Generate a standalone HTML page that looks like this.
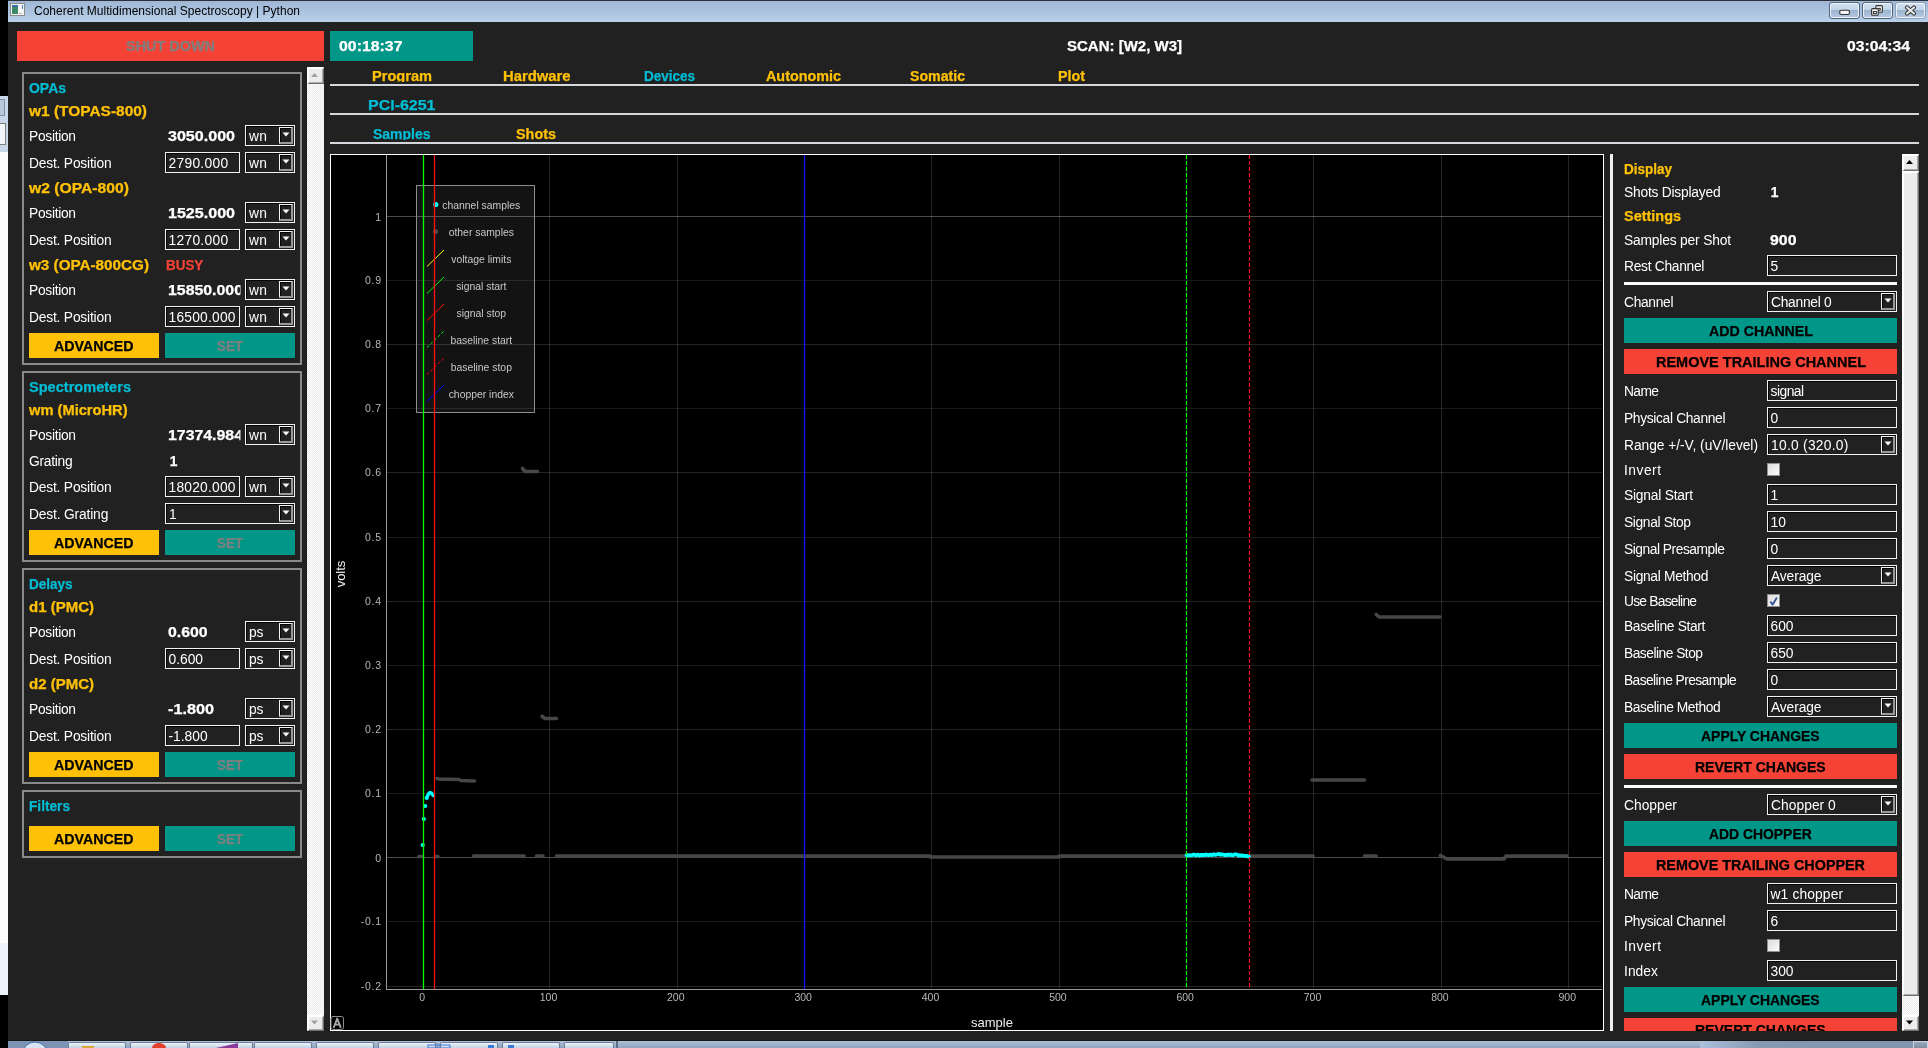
<!DOCTYPE html>
<html><head><meta charset="utf-8"><style>
html,body{margin:0;padding:0;width:1928px;height:1048px;overflow:hidden;background:#212121}
body{position:relative;font-family:"Liberation Sans",sans-serif}
body div, body svg{position:absolute}
body div div{position:absolute}
.t{white-space:pre}
</style></head><body>
<div style="left:0px;top:0px;width:8px;height:97px;background:#000"></div>
<div style="left:0px;top:96px;width:8px;height:56px;background:#c9d7ea"></div>
<div style="left:0px;top:99px;width:4px;height:15px;background:#b9c8dc;border:1px solid #8090a8;border-left:none"></div>
<div style="left:0px;top:123px;width:5px;height:20px;background:#f2f5f9;border:1px solid #808080;border-left:none"></div>
<div style="left:0px;top:152px;width:8px;height:791px;background:#fdfdfd"></div>
<div style="left:0px;top:943px;width:8px;height:52px;background:#eef3fc"></div>
<div style="left:0px;top:995px;width:8px;height:53px;background:#000"></div>
<div style="left:8px;top:0px;width:1920px;height:1041px;background:#212121"></div>
<div style="left:8px;top:0px;width:1920px;height:1px;background:#2a2f38"></div>
<div style="left:8px;top:1px;width:1920px;height:21px;background:linear-gradient(#9fb7d5,#b9d0ea)"></div>
<svg style="left:10px;top:3px" width="15" height="13"><rect x="0.5" y="0.5" width="14" height="12" fill="#f4f4f4" stroke="#8a8a8a"/><rect x="2" y="2" width="6" height="9" fill="#3c8a6a"/><rect x="2" y="2" width="6" height="2" fill="#3a6ea8"/><rect x="12" y="2" width="1" height="4" fill="#3b7bd0"/><rect x="9" y="10" width="3" height="1" fill="#bbb"/></svg>
<div class="t" style="left:34.00px;top:5.00px;font-size:12px;line-height:12px;color:#000;letter-spacing:0.016px;">Coherent Multidimensional Spectroscopy | Python</div>
<div style="left:1829px;top:2px;width:31px;height:17px;box-sizing:border-box;border:1px solid #52647c;border-radius:3px;box-shadow:inset 0 0 0 1px rgba(255,255,255,0.75);background:linear-gradient(#d2e0f0 0%,#c3d5ea 45%,#9db4d0 50%,#b6cae3 100%)"></div>
<div style="left:1862px;top:2px;width:31px;height:17px;box-sizing:border-box;border:1px solid #52647c;border-radius:3px;box-shadow:inset 0 0 0 1px rgba(255,255,255,0.75);background:linear-gradient(#d2e0f0 0%,#c3d5ea 45%,#9db4d0 50%,#b6cae3 100%)"></div>
<div style="left:1895px;top:2px;width:31px;height:17px;box-sizing:border-box;border:1px solid #8ea2bd;border-radius:3px;box-shadow:inset 0 0 0 1px rgba(255,255,255,0.75);background:linear-gradient(#d2e0f0 0%,#c3d5ea 45%,#9db4d0 50%,#b6cae3 100%)"></div>
<svg style="left:1829px;top:2px" width="97" height="17"><rect x="10.8" y="8.3" width="9.6" height="4.2" rx="1.2" fill="#f4f4f4" stroke="#333" stroke-width="1.1"/><rect x="46.8" y="3.6" width="6.6" height="6.6" rx="1" fill="#f4f4f4" stroke="#333" stroke-width="1.1"/><rect x="48.6" y="6.4" width="2.6" height="2" fill="none" stroke="#333" stroke-width="1"/><rect x="42.6" y="6.6" width="6.6" height="6.6" rx="1" fill="#f4f4f4" stroke="#333" stroke-width="1.1"/><rect x="44.4" y="9.6" width="3" height="2" fill="none" stroke="#333" stroke-width="1"/><path d="M78 5.5 L85 11.5 M85 5.5 L78 11.5" stroke="#333" stroke-width="4.2" stroke-linecap="round"/><path d="M78 5.5 L85 11.5 M85 5.5 L78 11.5" stroke="#e6e6e6" stroke-width="2.2" stroke-linecap="round"/></svg>
<div style="left:17px;top:31px;width:307px;height:30px;background:#f44336"></div>
<div class="t" style="left:126.00px;top:40.00px;font-size:13.8px;line-height:13.8px;color:#7f7f7f;font-weight:bold;-webkit-text-stroke:0.25px #7f7f7f;transform:scaleX(1.0461);transform-origin:0 0;">SHUT DOWN</div>
<div style="left:330px;top:31px;width:143px;height:30px;background:#009688"></div>
<div class="t" style="left:339.00px;top:40.00px;font-size:13.8px;line-height:13.8px;color:#fff;font-weight:bold;-webkit-text-stroke:0.25px #fff;transform:scaleX(1.1496);transform-origin:0 0;">00:18:37</div>
<div class="t" style="left:1067.00px;top:40.00px;font-size:13.8px;line-height:13.8px;color:#fff;font-weight:bold;-webkit-text-stroke:0.25px #fff;transform:scaleX(1.0871);transform-origin:0 0;">SCAN: [W2, W3]</div>
<div class="t" style="left:1846.50px;top:40.00px;font-size:13.8px;line-height:13.8px;color:#fff;font-weight:bold;-webkit-text-stroke:0.25px #fff;transform:scaleX(1.1406);transform-origin:0 0;">03:04:34</div>
<div style="left:330px;top:84px;width:1589px;height:2px;background:#d4d7db"></div>
<div style="left:330px;top:113px;width:1589px;height:2px;background:#d4d7db"></div>
<div style="left:330px;top:142px;width:1589px;height:2px;background:#d4d7db"></div>
<div style="left:0;top:0;width:1928px;height:82px;overflow:hidden"><div class="t" style="left:372.00px;top:70.00px;font-size:13.8px;line-height:13.8px;color:#ffc107;font-weight:bold;-webkit-text-stroke:0.25px #ffc107;transform:scaleX(1.0573);transform-origin:0 0;">Program</div></div>
<div style="left:0;top:0;width:1928px;height:82px;overflow:hidden"><div class="t" style="left:502.65px;top:70.00px;font-size:13.8px;line-height:13.8px;color:#ffc107;font-weight:bold;-webkit-text-stroke:0.25px #ffc107;transform:scaleX(1.0733);transform-origin:0 0;">Hardware</div></div>
<div style="left:0;top:0;width:1928px;height:82px;overflow:hidden"><div class="t" style="left:643.90px;top:70.00px;font-size:13.8px;line-height:13.8px;color:#00bcd4;font-weight:bold;-webkit-text-stroke:0.25px #00bcd4;transform:scaleX(0.9775);transform-origin:0 0;">Devices</div></div>
<div style="left:0;top:0;width:1928px;height:82px;overflow:hidden"><div class="t" style="left:765.80px;top:70.00px;font-size:13.8px;line-height:13.8px;color:#ffc107;font-weight:bold;-webkit-text-stroke:0.25px #ffc107;transform:scaleX(1.0410);transform-origin:0 0;">Autonomic</div></div>
<div style="left:0;top:0;width:1928px;height:82px;overflow:hidden"><div class="t" style="left:909.80px;top:70.00px;font-size:13.8px;line-height:13.8px;color:#ffc107;font-weight:bold;-webkit-text-stroke:0.25px #ffc107;transform:scaleX(1.0247);transform-origin:0 0;">Somatic</div></div>
<div style="left:0;top:0;width:1928px;height:82px;overflow:hidden"><div class="t" style="left:1058.00px;top:70.00px;font-size:13.8px;line-height:13.8px;color:#ffc107;font-weight:bold;-webkit-text-stroke:0.25px #ffc107;transform:scaleX(1.0360);transform-origin:0 0;">Plot</div></div>
<div class="t" style="left:368.05px;top:99.00px;font-size:13.8px;line-height:13.8px;color:#00bcd4;font-weight:bold;-webkit-text-stroke:0.25px #00bcd4;transform:scaleX(1.1579);transform-origin:0 0;">PCI-6251</div>
<div style="left:0;top:0;width:1928px;height:140px;overflow:hidden"><div class="t" style="left:372.55px;top:128.00px;font-size:13.8px;line-height:13.8px;color:#00bcd4;font-weight:bold;-webkit-text-stroke:0.25px #00bcd4;transform:scaleX(1.0129);transform-origin:0 0;">Samples</div></div>
<div class="t" style="left:516.40px;top:128.00px;font-size:13.8px;line-height:13.8px;color:#ffc107;font-weight:bold;-webkit-text-stroke:0.25px #ffc107;transform:scaleX(1.0436);transform-origin:0 0;">Shots</div>
<div style="left:22px;top:72px;width:280px;height:293px;box-sizing:border-box;border:2px solid #898989"></div>
<div style="left:22px;top:371px;width:280px;height:191px;box-sizing:border-box;border:2px solid #898989"></div>
<div style="left:22px;top:568px;width:280px;height:216px;box-sizing:border-box;border:2px solid #898989"></div>
<div style="left:22px;top:790px;width:280px;height:68px;box-sizing:border-box;border:2px solid #898989"></div>
<div class="t" style="left:29.00px;top:82.00px;font-size:13.8px;line-height:13.8px;color:#00bcd4;font-weight:bold;-webkit-text-stroke:0.25px #00bcd4;transform:scaleX(1.0124);transform-origin:0 0;">OPAs</div>
<div class="t" style="left:29.00px;top:105.00px;font-size:13.8px;line-height:13.8px;color:#ffc107;font-weight:bold;-webkit-text-stroke:0.25px #ffc107;transform:scaleX(1.1206);transform-origin:0 0;">w1 (TOPAS-800)</div>
<div class="t" style="left:29.00px;top:130.00px;font-size:13.8px;line-height:13.8px;color:#fff;letter-spacing:-0.299px;">Position</div>
<div class="t" style="left:168.00px;top:130.00px;font-size:13.8px;line-height:13.8px;color:#fff;font-weight:bold;-webkit-text-stroke:0.25px #fff;transform:scaleX(1.1643);transform-origin:0 0;width:61.84px;overflow:hidden;">3050.000</div>
<div style="left:245px;top:125px;width:50px;height:21px;background:#212121;box-sizing:border-box;border:1px solid #f2f2f2;box-shadow:inset 1px 1px 0 #050505"></div>
<div style="left:279px;top:127px;width:14px;height:17px;box-sizing:border-box;border-top:1px solid #f4f4f4;border-left:1px solid #f4f4f4;border-right:2px solid #9a9a9a;border-bottom:2px solid #9a9a9a;box-shadow:inset 1px 1px 0 #050505;background:#212121"></div>
<svg style="left:279px;top:127px" width="14" height="17"><path d="M3.5 5.5 L10.5 5.5 L7 9.5 Z" fill="#f8f8f8"/></svg>
<div class="t" style="left:249.00px;top:130.00px;font-size:13.8px;line-height:13.8px;color:#fff;letter-spacing:0.359px;">wn</div>
<div class="t" style="left:29.00px;top:157.00px;font-size:13.8px;line-height:13.8px;color:#fff;letter-spacing:-0.194px;">Dest. Position</div>
<div style="left:165px;top:152px;width:75px;height:21px;background:#212121;box-sizing:border-box;border:1px solid #f2f2f2;box-shadow:inset 1px 1px 0 #050505"></div>
<div class="t" style="left:168.50px;top:157.00px;font-size:13.8px;line-height:13.8px;color:#fff;letter-spacing:0.293px;">2790.000</div>
<div style="left:245px;top:152px;width:50px;height:21px;background:#212121;box-sizing:border-box;border:1px solid #f2f2f2;box-shadow:inset 1px 1px 0 #050505"></div>
<div style="left:279px;top:154px;width:14px;height:17px;box-sizing:border-box;border-top:1px solid #f4f4f4;border-left:1px solid #f4f4f4;border-right:2px solid #9a9a9a;border-bottom:2px solid #9a9a9a;box-shadow:inset 1px 1px 0 #050505;background:#212121"></div>
<svg style="left:279px;top:154px" width="14" height="17"><path d="M3.5 5.5 L10.5 5.5 L7 9.5 Z" fill="#f8f8f8"/></svg>
<div class="t" style="left:249.00px;top:157.00px;font-size:13.8px;line-height:13.8px;color:#fff;letter-spacing:0.359px;">wn</div>
<div class="t" style="left:29.00px;top:182.00px;font-size:13.8px;line-height:13.8px;color:#ffc107;font-weight:bold;-webkit-text-stroke:0.25px #ffc107;transform:scaleX(1.1374);transform-origin:0 0;">w2 (OPA-800)</div>
<div class="t" style="left:29.00px;top:207.00px;font-size:13.8px;line-height:13.8px;color:#fff;letter-spacing:-0.299px;">Position</div>
<div class="t" style="left:168.00px;top:207.00px;font-size:13.8px;line-height:13.8px;color:#fff;font-weight:bold;-webkit-text-stroke:0.25px #fff;transform:scaleX(1.1643);transform-origin:0 0;width:61.84px;overflow:hidden;">1525.000</div>
<div style="left:245px;top:202px;width:50px;height:21px;background:#212121;box-sizing:border-box;border:1px solid #f2f2f2;box-shadow:inset 1px 1px 0 #050505"></div>
<div style="left:279px;top:204px;width:14px;height:17px;box-sizing:border-box;border-top:1px solid #f4f4f4;border-left:1px solid #f4f4f4;border-right:2px solid #9a9a9a;border-bottom:2px solid #9a9a9a;box-shadow:inset 1px 1px 0 #050505;background:#212121"></div>
<svg style="left:279px;top:204px" width="14" height="17"><path d="M3.5 5.5 L10.5 5.5 L7 9.5 Z" fill="#f8f8f8"/></svg>
<div class="t" style="left:249.00px;top:207.00px;font-size:13.8px;line-height:13.8px;color:#fff;letter-spacing:0.359px;">wn</div>
<div class="t" style="left:29.00px;top:234.00px;font-size:13.8px;line-height:13.8px;color:#fff;letter-spacing:-0.194px;">Dest. Position</div>
<div style="left:165px;top:229px;width:75px;height:21px;background:#212121;box-sizing:border-box;border:1px solid #f2f2f2;box-shadow:inset 1px 1px 0 #050505"></div>
<div class="t" style="left:168.50px;top:234.00px;font-size:13.8px;line-height:13.8px;color:#fff;letter-spacing:0.293px;">1270.000</div>
<div style="left:245px;top:229px;width:50px;height:21px;background:#212121;box-sizing:border-box;border:1px solid #f2f2f2;box-shadow:inset 1px 1px 0 #050505"></div>
<div style="left:279px;top:231px;width:14px;height:17px;box-sizing:border-box;border-top:1px solid #f4f4f4;border-left:1px solid #f4f4f4;border-right:2px solid #9a9a9a;border-bottom:2px solid #9a9a9a;box-shadow:inset 1px 1px 0 #050505;background:#212121"></div>
<svg style="left:279px;top:231px" width="14" height="17"><path d="M3.5 5.5 L10.5 5.5 L7 9.5 Z" fill="#f8f8f8"/></svg>
<div class="t" style="left:249.00px;top:234.00px;font-size:13.8px;line-height:13.8px;color:#fff;letter-spacing:0.359px;">wn</div>
<div class="t" style="left:29.00px;top:259.00px;font-size:13.8px;line-height:13.8px;color:#ffc107;font-weight:bold;-webkit-text-stroke:0.25px #ffc107;transform:scaleX(1.1047);transform-origin:0 0;">w3 (OPA-800CG)</div>
<div class="t" style="left:165.70px;top:259.00px;font-size:13.8px;line-height:13.8px;color:#f44336;font-weight:bold;-webkit-text-stroke:0.25px #f44336;transform:scaleX(0.9728);transform-origin:0 0;">BUSY</div>
<div class="t" style="left:29.00px;top:284.00px;font-size:13.8px;line-height:13.8px;color:#fff;letter-spacing:-0.299px;">Position</div>
<div class="t" style="left:168.00px;top:284.00px;font-size:13.8px;line-height:13.8px;color:#fff;font-weight:bold;-webkit-text-stroke:0.25px #fff;transform:scaleX(1.1500);transform-origin:0 0;width:62.61px;overflow:hidden;">15850.000</div>
<div style="left:245px;top:279px;width:50px;height:21px;background:#212121;box-sizing:border-box;border:1px solid #f2f2f2;box-shadow:inset 1px 1px 0 #050505"></div>
<div style="left:279px;top:281px;width:14px;height:17px;box-sizing:border-box;border-top:1px solid #f4f4f4;border-left:1px solid #f4f4f4;border-right:2px solid #9a9a9a;border-bottom:2px solid #9a9a9a;box-shadow:inset 1px 1px 0 #050505;background:#212121"></div>
<svg style="left:279px;top:281px" width="14" height="17"><path d="M3.5 5.5 L10.5 5.5 L7 9.5 Z" fill="#f8f8f8"/></svg>
<div class="t" style="left:249.00px;top:284.00px;font-size:13.8px;line-height:13.8px;color:#fff;letter-spacing:0.359px;">wn</div>
<div class="t" style="left:29.00px;top:311.00px;font-size:13.8px;line-height:13.8px;color:#fff;letter-spacing:-0.194px;">Dest. Position</div>
<div style="left:165px;top:306px;width:75px;height:21px;background:#212121;box-sizing:border-box;border:1px solid #f2f2f2;box-shadow:inset 1px 1px 0 #050505"></div>
<div class="t" style="left:168.50px;top:311.00px;font-size:13.8px;line-height:13.8px;color:#fff;letter-spacing:0.223px;">16500.000</div>
<div style="left:245px;top:306px;width:50px;height:21px;background:#212121;box-sizing:border-box;border:1px solid #f2f2f2;box-shadow:inset 1px 1px 0 #050505"></div>
<div style="left:279px;top:308px;width:14px;height:17px;box-sizing:border-box;border-top:1px solid #f4f4f4;border-left:1px solid #f4f4f4;border-right:2px solid #9a9a9a;border-bottom:2px solid #9a9a9a;box-shadow:inset 1px 1px 0 #050505;background:#212121"></div>
<svg style="left:279px;top:308px" width="14" height="17"><path d="M3.5 5.5 L10.5 5.5 L7 9.5 Z" fill="#f8f8f8"/></svg>
<div class="t" style="left:249.00px;top:311.00px;font-size:13.8px;line-height:13.8px;color:#fff;letter-spacing:0.359px;">wn</div>
<div style="left:29px;top:333px;width:130px;height:25px;background:#ffc107"></div>
<div class="t" style="left:54.30px;top:340.00px;font-size:13.8px;line-height:13.8px;color:#000;font-weight:bold;-webkit-text-stroke:0.25px #000;transform:scaleX(1.0289);transform-origin:0 0;">ADVANCED</div>
<div style="left:165px;top:333px;width:130px;height:25px;background:#009688"></div>
<div class="t" style="left:217.00px;top:340.00px;font-size:13.8px;line-height:13.8px;color:#7f7f7f;font-weight:bold;-webkit-text-stroke:0.25px #7f7f7f;transform:scaleX(0.9686);transform-origin:0 0;">SET</div>
<div class="t" style="left:29.00px;top:381.00px;font-size:13.8px;line-height:13.8px;color:#00bcd4;font-weight:bold;-webkit-text-stroke:0.25px #00bcd4;transform:scaleX(1.0556);transform-origin:0 0;">Spectrometers</div>
<div class="t" style="left:29.00px;top:404.00px;font-size:13.8px;line-height:13.8px;color:#ffc107;font-weight:bold;-webkit-text-stroke:0.25px #ffc107;transform:scaleX(1.0631);transform-origin:0 0;">wm (MicroHR)</div>
<div class="t" style="left:29.00px;top:429.00px;font-size:13.8px;line-height:13.8px;color:#fff;letter-spacing:-0.299px;">Position</div>
<div class="t" style="left:168.00px;top:429.00px;font-size:13.8px;line-height:13.8px;color:#fff;font-weight:bold;-webkit-text-stroke:0.25px #fff;transform:scaleX(1.1500);transform-origin:0 0;width:62.61px;overflow:hidden;">17374.984</div>
<div style="left:245px;top:424px;width:50px;height:21px;background:#212121;box-sizing:border-box;border:1px solid #f2f2f2;box-shadow:inset 1px 1px 0 #050505"></div>
<div style="left:279px;top:426px;width:14px;height:17px;box-sizing:border-box;border-top:1px solid #f4f4f4;border-left:1px solid #f4f4f4;border-right:2px solid #9a9a9a;border-bottom:2px solid #9a9a9a;box-shadow:inset 1px 1px 0 #050505;background:#212121"></div>
<svg style="left:279px;top:426px" width="14" height="17"><path d="M3.5 5.5 L10.5 5.5 L7 9.5 Z" fill="#f8f8f8"/></svg>
<div class="t" style="left:249.00px;top:429.00px;font-size:13.8px;line-height:13.8px;color:#fff;letter-spacing:0.359px;">wn</div>
<div class="t" style="left:29.00px;top:455.00px;font-size:13.8px;line-height:13.8px;color:#fff;letter-spacing:-0.275px;">Grating</div>
<div class="t" style="left:169.70px;top:455.00px;font-size:13.8px;line-height:13.8px;color:#fff;font-weight:bold;-webkit-text-stroke:0.25px #fff;">1</div>
<div class="t" style="left:29.00px;top:481.00px;font-size:13.8px;line-height:13.8px;color:#fff;letter-spacing:-0.194px;">Dest. Position</div>
<div style="left:165px;top:476px;width:75px;height:21px;background:#212121;box-sizing:border-box;border:1px solid #f2f2f2;box-shadow:inset 1px 1px 0 #050505"></div>
<div class="t" style="left:168.50px;top:481.00px;font-size:13.8px;line-height:13.8px;color:#fff;letter-spacing:0.223px;">18020.000</div>
<div style="left:245px;top:476px;width:50px;height:21px;background:#212121;box-sizing:border-box;border:1px solid #f2f2f2;box-shadow:inset 1px 1px 0 #050505"></div>
<div style="left:279px;top:478px;width:14px;height:17px;box-sizing:border-box;border-top:1px solid #f4f4f4;border-left:1px solid #f4f4f4;border-right:2px solid #9a9a9a;border-bottom:2px solid #9a9a9a;box-shadow:inset 1px 1px 0 #050505;background:#212121"></div>
<svg style="left:279px;top:478px" width="14" height="17"><path d="M3.5 5.5 L10.5 5.5 L7 9.5 Z" fill="#f8f8f8"/></svg>
<div class="t" style="left:249.00px;top:481.00px;font-size:13.8px;line-height:13.8px;color:#fff;letter-spacing:0.359px;">wn</div>
<div class="t" style="left:29.00px;top:508.00px;font-size:13.8px;line-height:13.8px;color:#fff;letter-spacing:-0.165px;">Dest. Grating</div>
<div style="left:165px;top:503px;width:130px;height:21px;background:#212121;box-sizing:border-box;border:1px solid #f2f2f2;box-shadow:inset 1px 1px 0 #050505"></div>
<div style="left:279px;top:505px;width:14px;height:17px;box-sizing:border-box;border-top:1px solid #f4f4f4;border-left:1px solid #f4f4f4;border-right:2px solid #9a9a9a;border-bottom:2px solid #9a9a9a;box-shadow:inset 1px 1px 0 #050505;background:#212121"></div>
<svg style="left:279px;top:505px" width="14" height="17"><path d="M3.5 5.5 L10.5 5.5 L7 9.5 Z" fill="#f8f8f8"/></svg>
<div class="t" style="left:169.00px;top:508.00px;font-size:13.8px;line-height:13.8px;color:#fff;">1</div>
<div style="left:29px;top:530px;width:130px;height:25px;background:#ffc107"></div>
<div class="t" style="left:54.30px;top:537.00px;font-size:13.8px;line-height:13.8px;color:#000;font-weight:bold;-webkit-text-stroke:0.25px #000;transform:scaleX(1.0289);transform-origin:0 0;">ADVANCED</div>
<div style="left:165px;top:530px;width:130px;height:25px;background:#009688"></div>
<div class="t" style="left:217.00px;top:537.00px;font-size:13.8px;line-height:13.8px;color:#7f7f7f;font-weight:bold;-webkit-text-stroke:0.25px #7f7f7f;transform:scaleX(0.9686);transform-origin:0 0;">SET</div>
<div class="t" style="left:29.00px;top:578.00px;font-size:13.8px;line-height:13.8px;color:#00bcd4;font-weight:bold;-webkit-text-stroke:0.25px #00bcd4;transform:scaleX(0.9798);transform-origin:0 0;">Delays</div>
<div class="t" style="left:29.00px;top:601.00px;font-size:13.8px;line-height:13.8px;color:#ffc107;font-weight:bold;-webkit-text-stroke:0.25px #ffc107;transform:scaleX(1.0870);transform-origin:0 0;">d1 (PMC)</div>
<div class="t" style="left:29.00px;top:626.00px;font-size:13.8px;line-height:13.8px;color:#fff;letter-spacing:-0.299px;">Position</div>
<div class="t" style="left:168.00px;top:626.00px;font-size:13.8px;line-height:13.8px;color:#fff;font-weight:bold;-webkit-text-stroke:0.25px #fff;transform:scaleX(1.1497);transform-origin:0 0;width:62.63px;overflow:hidden;">0.600</div>
<div style="left:245px;top:621px;width:50px;height:21px;background:#212121;box-sizing:border-box;border:1px solid #f2f2f2;box-shadow:inset 1px 1px 0 #050505"></div>
<div style="left:279px;top:623px;width:14px;height:17px;box-sizing:border-box;border-top:1px solid #f4f4f4;border-left:1px solid #f4f4f4;border-right:2px solid #9a9a9a;border-bottom:2px solid #9a9a9a;box-shadow:inset 1px 1px 0 #050505;background:#212121"></div>
<svg style="left:279px;top:623px" width="14" height="17"><path d="M3.5 5.5 L10.5 5.5 L7 9.5 Z" fill="#f8f8f8"/></svg>
<div class="t" style="left:249.00px;top:626.00px;font-size:13.8px;line-height:13.8px;color:#fff;letter-spacing:-0.178px;">ps</div>
<div class="t" style="left:29.00px;top:653.00px;font-size:13.8px;line-height:13.8px;color:#fff;letter-spacing:-0.194px;">Dest. Position</div>
<div style="left:165px;top:648px;width:75px;height:21px;background:#212121;box-sizing:border-box;border:1px solid #f2f2f2;box-shadow:inset 1px 1px 0 #050505"></div>
<div class="t" style="left:168.50px;top:653.00px;font-size:13.8px;line-height:13.8px;color:#fff;">0.600</div>
<div style="left:245px;top:648px;width:50px;height:21px;background:#212121;box-sizing:border-box;border:1px solid #f2f2f2;box-shadow:inset 1px 1px 0 #050505"></div>
<div style="left:279px;top:650px;width:14px;height:17px;box-sizing:border-box;border-top:1px solid #f4f4f4;border-left:1px solid #f4f4f4;border-right:2px solid #9a9a9a;border-bottom:2px solid #9a9a9a;box-shadow:inset 1px 1px 0 #050505;background:#212121"></div>
<svg style="left:279px;top:650px" width="14" height="17"><path d="M3.5 5.5 L10.5 5.5 L7 9.5 Z" fill="#f8f8f8"/></svg>
<div class="t" style="left:249.00px;top:653.00px;font-size:13.8px;line-height:13.8px;color:#fff;letter-spacing:-0.178px;">ps</div>
<div class="t" style="left:29.00px;top:678.00px;font-size:13.8px;line-height:13.8px;color:#ffc107;font-weight:bold;-webkit-text-stroke:0.25px #ffc107;transform:scaleX(1.0870);transform-origin:0 0;">d2 (PMC)</div>
<div class="t" style="left:29.00px;top:703.00px;font-size:13.8px;line-height:13.8px;color:#fff;letter-spacing:-0.299px;">Position</div>
<div class="t" style="left:168.00px;top:703.00px;font-size:13.8px;line-height:13.8px;color:#fff;font-weight:bold;-webkit-text-stroke:0.25px #fff;transform:scaleX(1.1757);transform-origin:0 0;width:61.24px;overflow:hidden;">-1.800</div>
<div style="left:245px;top:698px;width:50px;height:21px;background:#212121;box-sizing:border-box;border:1px solid #f2f2f2;box-shadow:inset 1px 1px 0 #050505"></div>
<div style="left:279px;top:700px;width:14px;height:17px;box-sizing:border-box;border-top:1px solid #f4f4f4;border-left:1px solid #f4f4f4;border-right:2px solid #9a9a9a;border-bottom:2px solid #9a9a9a;box-shadow:inset 1px 1px 0 #050505;background:#212121"></div>
<svg style="left:279px;top:700px" width="14" height="17"><path d="M3.5 5.5 L10.5 5.5 L7 9.5 Z" fill="#f8f8f8"/></svg>
<div class="t" style="left:249.00px;top:703.00px;font-size:13.8px;line-height:13.8px;color:#fff;letter-spacing:-0.178px;">ps</div>
<div class="t" style="left:29.00px;top:730.00px;font-size:13.8px;line-height:13.8px;color:#fff;letter-spacing:-0.194px;">Dest. Position</div>
<div style="left:165px;top:725px;width:75px;height:21px;background:#212121;box-sizing:border-box;border:1px solid #f2f2f2;box-shadow:inset 1px 1px 0 #050505"></div>
<div class="t" style="left:168.50px;top:730.00px;font-size:13.8px;line-height:13.8px;color:#fff;">-1.800</div>
<div style="left:245px;top:725px;width:50px;height:21px;background:#212121;box-sizing:border-box;border:1px solid #f2f2f2;box-shadow:inset 1px 1px 0 #050505"></div>
<div style="left:279px;top:727px;width:14px;height:17px;box-sizing:border-box;border-top:1px solid #f4f4f4;border-left:1px solid #f4f4f4;border-right:2px solid #9a9a9a;border-bottom:2px solid #9a9a9a;box-shadow:inset 1px 1px 0 #050505;background:#212121"></div>
<svg style="left:279px;top:727px" width="14" height="17"><path d="M3.5 5.5 L10.5 5.5 L7 9.5 Z" fill="#f8f8f8"/></svg>
<div class="t" style="left:249.00px;top:730.00px;font-size:13.8px;line-height:13.8px;color:#fff;letter-spacing:-0.178px;">ps</div>
<div style="left:29px;top:752px;width:130px;height:25px;background:#ffc107"></div>
<div class="t" style="left:54.30px;top:759.00px;font-size:13.8px;line-height:13.8px;color:#000;font-weight:bold;-webkit-text-stroke:0.25px #000;transform:scaleX(1.0289);transform-origin:0 0;">ADVANCED</div>
<div style="left:165px;top:752px;width:130px;height:25px;background:#009688"></div>
<div class="t" style="left:217.00px;top:759.00px;font-size:13.8px;line-height:13.8px;color:#7f7f7f;font-weight:bold;-webkit-text-stroke:0.25px #7f7f7f;transform:scaleX(0.9686);transform-origin:0 0;">SET</div>
<div class="t" style="left:29.00px;top:800.00px;font-size:13.8px;line-height:13.8px;color:#00bcd4;font-weight:bold;-webkit-text-stroke:0.25px #00bcd4;transform:scaleX(0.9902);transform-origin:0 0;">Filters</div>
<div style="left:29px;top:826px;width:130px;height:25px;background:#ffc107"></div>
<div class="t" style="left:54.30px;top:833.00px;font-size:13.8px;line-height:13.8px;color:#000;font-weight:bold;-webkit-text-stroke:0.25px #000;transform:scaleX(1.0289);transform-origin:0 0;">ADVANCED</div>
<div style="left:165px;top:826px;width:130px;height:25px;background:#009688"></div>
<div class="t" style="left:217.00px;top:833.00px;font-size:13.8px;line-height:13.8px;color:#7f7f7f;font-weight:bold;-webkit-text-stroke:0.25px #7f7f7f;transform:scaleX(0.9686);transform-origin:0 0;">SET</div>
<div style="left:307px;top:67px;width:17px;height:964px;background:repeating-conic-gradient(#e9e9e9 0 25%,#ffffff 0 50%) 0 0/2px 2px"></div>
<div style="left:307px;top:67px;width:17px;height:17px;box-sizing:border-box;background:#ececec;border-right:1px solid #6e6e6e;border-bottom:1px solid #6e6e6e;border-top:2px solid #fff;border-left:2px solid #fff;box-shadow:inset -1px -1px 0 #ababab"></div>
<div style="left:307px;top:1015px;width:17px;height:16px;box-sizing:border-box;background:#ececec;border-right:1px solid #6e6e6e;border-bottom:1px solid #6e6e6e;border-top:2px solid #fff;border-left:2px solid #fff;box-shadow:inset -1px -1px 0 #ababab"></div>
<svg style="left:307px;top:67px" width="17" height="16"><path d="M4 10 L11 10 L7.5 6 Z" fill="#a0a0a0"/></svg>
<svg style="left:307px;top:1015px" width="17" height="16"><path d="M4 5.5 L11 5.5 L7.5 9.5 Z" fill="#a0a0a0"/></svg>
<svg style="left:330px;top:154px" width="1274" height="877" viewBox="330 154 1274 877">
<rect x="330.5" y="154.5" width="1273" height="876" fill="#000" stroke="#fff" stroke-width="1"/>
<line x1="387" y1="986.5" x2="1602" y2="986.5" stroke="#242424" stroke-width="1"/>
<line x1="387" y1="921.5" x2="1602" y2="921.5" stroke="#191919" stroke-width="1"/>
<line x1="387" y1="857.5" x2="1602" y2="857.5" stroke="#4a4a4a" stroke-width="1"/>
<line x1="387" y1="793.5" x2="1602" y2="793.5" stroke="#191919" stroke-width="1"/>
<line x1="387" y1="729.5" x2="1602" y2="729.5" stroke="#242424" stroke-width="1"/>
<line x1="387" y1="665.5" x2="1602" y2="665.5" stroke="#191919" stroke-width="1"/>
<line x1="387" y1="601.5" x2="1602" y2="601.5" stroke="#242424" stroke-width="1"/>
<line x1="387" y1="537.5" x2="1602" y2="537.5" stroke="#191919" stroke-width="1"/>
<line x1="387" y1="472.5" x2="1602" y2="472.5" stroke="#242424" stroke-width="1"/>
<line x1="387" y1="408.5" x2="1602" y2="408.5" stroke="#191919" stroke-width="1"/>
<line x1="387" y1="344.5" x2="1602" y2="344.5" stroke="#242424" stroke-width="1"/>
<line x1="387" y1="280.5" x2="1602" y2="280.5" stroke="#191919" stroke-width="1"/>
<line x1="387" y1="216.5" x2="1602" y2="216.5" stroke="#4a4a4a" stroke-width="1"/>
<line x1="549.5" y1="155" x2="549.5" y2="988" stroke="#242424" stroke-width="1" style="mix-blend-mode:screen"/>
<line x1="677.5" y1="155" x2="677.5" y2="988" stroke="#242424" stroke-width="1" style="mix-blend-mode:screen"/>
<line x1="804.5" y1="155" x2="804.5" y2="988" stroke="#242424" stroke-width="1" style="mix-blend-mode:screen"/>
<line x1="931.5" y1="155" x2="931.5" y2="988" stroke="#242424" stroke-width="1" style="mix-blend-mode:screen"/>
<line x1="1059.5" y1="155" x2="1059.5" y2="988" stroke="#242424" stroke-width="1" style="mix-blend-mode:screen"/>
<line x1="1186.5" y1="155" x2="1186.5" y2="988" stroke="#242424" stroke-width="1" style="mix-blend-mode:screen"/>
<line x1="1313.5" y1="155" x2="1313.5" y2="988" stroke="#242424" stroke-width="1" style="mix-blend-mode:screen"/>
<line x1="1441.5" y1="155" x2="1441.5" y2="988" stroke="#242424" stroke-width="1" style="mix-blend-mode:screen"/>
<line x1="1568.5" y1="155" x2="1568.5" y2="988" stroke="#242424" stroke-width="1" style="mix-blend-mode:screen"/>
<line x1="386.5" y1="155" x2="386.5" y2="990" stroke="#9a9a9a" stroke-width="1"/>
<line x1="386" y1="989.5" x2="1602" y2="989.5" stroke="#9a9a9a" stroke-width="1"/>
<g font-family="Liberation Sans" font-size="10.5" fill="#b8b8b8"><text x="381.7" y="990.2" text-anchor="end" letter-spacing="0.7">-0.2</text><text x="381.7" y="925.2" text-anchor="end" letter-spacing="0.7">-0.1</text><text x="381" y="862.2" text-anchor="end">0</text><text x="381.7" y="797.2" text-anchor="end" letter-spacing="0.7">0.1</text><text x="381.7" y="733.2" text-anchor="end" letter-spacing="0.7">0.2</text><text x="381.7" y="669.2" text-anchor="end" letter-spacing="0.7">0.3</text><text x="381.7" y="605.2" text-anchor="end" letter-spacing="0.7">0.4</text><text x="381.7" y="541.2" text-anchor="end" letter-spacing="0.7">0.5</text><text x="381.7" y="476.2" text-anchor="end" letter-spacing="0.7">0.6</text><text x="381.7" y="412.2" text-anchor="end" letter-spacing="0.7">0.7</text><text x="381.7" y="348.2" text-anchor="end" letter-spacing="0.7">0.8</text><text x="381.7" y="284.2" text-anchor="end" letter-spacing="0.7">0.9</text><text x="381" y="221.2" text-anchor="end">1</text><text x="422.1" y="1001" text-anchor="middle">0</text><text x="548.5" y="1001" text-anchor="middle">100</text><text x="675.8" y="1001" text-anchor="middle">200</text><text x="803.2" y="1001" text-anchor="middle">300</text><text x="930.5" y="1001" text-anchor="middle">400</text><text x="1057.9" y="1001" text-anchor="middle">500</text><text x="1185.2" y="1001" text-anchor="middle">600</text><text x="1312.5" y="1001" text-anchor="middle">700</text><text x="1439.9" y="1001" text-anchor="middle">800</text><text x="1567.3" y="1001" text-anchor="middle">900</text></g>
<text x="992" y="1027" text-anchor="middle" font-family="Liberation Sans" font-size="13" fill="#f0f0f0">sample</text>
<text transform="translate(344.5 574) rotate(-90)" text-anchor="middle" font-family="Liberation Sans" font-size="13" fill="#f0f0f0">volts</text>
<rect x="331" y="1016.5" width="12.5" height="13" rx="2" fill="none" stroke="#909090" stroke-width="1"/>
<path d="M333.6 1027.8 L337.2 1018.6 L340.8 1027.8 M334.9 1024.6 L339.5 1024.6" stroke="#a8a8a8" stroke-width="1.9" fill="none" stroke-linejoin="round"/>
<rect x="416.5" y="185.5" width="118" height="227" fill="#ffffff" fill-opacity="0.075" stroke="#8c8c8c" stroke-width="1"/>
<g font-family="Liberation Sans" font-size="10.4" fill="#c8c8c8"><text x="481.3" y="209" text-anchor="middle">channel samples</text><text x="481.3" y="236" text-anchor="middle">other samples</text><text x="481.3" y="263" text-anchor="middle">voltage limits</text><text x="481.3" y="290" text-anchor="middle">signal start</text><text x="481.3" y="317" text-anchor="middle">signal stop</text><text x="481.3" y="344" text-anchor="middle">baseline start</text><text x="481.3" y="371" text-anchor="middle">baseline stop</text><text x="481.3" y="398" text-anchor="middle">chopper index</text></g>
<circle cx="435.8" cy="204.5" r="2.6" fill="#00ffff"/>
<circle cx="435.5" cy="231.5" r="2.6" fill="#4a4a4a"/>
<line x1="427" y1="266.5" x2="444" y2="250.0" stroke="#ffff00" stroke-width="1"/>
<line x1="427" y1="293.5" x2="444" y2="277.0" stroke="#00ff00" stroke-width="1"/>
<line x1="427" y1="320.5" x2="444" y2="304.0" stroke="#ff0000" stroke-width="1"/>
<line x1="427" y1="347.5" x2="444" y2="331.0" stroke="#00ff00" stroke-width="1" stroke-dasharray="3 2"/>
<line x1="427" y1="374.5" x2="444" y2="358.0" stroke="#ff0000" stroke-width="1" stroke-dasharray="3 2"/>
<line x1="427" y1="401.5" x2="444" y2="385.0" stroke="#0000ff" stroke-width="1"/>
<polyline points="419,856.5 422,856.5" fill="none" stroke="#474747" stroke-width="3.6" stroke-linecap="round" stroke-linejoin="round"/>
<polyline points="435.5,856.5 438,856.5" fill="none" stroke="#474747" stroke-width="3.6" stroke-linecap="round" stroke-linejoin="round"/>
<polyline points="473.5,856 524,856" fill="none" stroke="#474747" stroke-width="3.6" stroke-linecap="round" stroke-linejoin="round"/>
<polyline points="536.5,856 543,856" fill="none" stroke="#474747" stroke-width="3.6" stroke-linecap="round" stroke-linejoin="round"/>
<polyline points="556.5,856 930,856" fill="none" stroke="#474747" stroke-width="3.6" stroke-linecap="round" stroke-linejoin="round"/>
<polyline points="930,857 1059,857" fill="none" stroke="#474747" stroke-width="3.6" stroke-linecap="round" stroke-linejoin="round"/>
<polyline points="1059,856 1186,856" fill="none" stroke="#474747" stroke-width="3.6" stroke-linecap="round" stroke-linejoin="round"/>
<polyline points="1249,856 1313,856" fill="none" stroke="#474747" stroke-width="3.6" stroke-linecap="round" stroke-linejoin="round"/>
<polyline points="1364.5,856 1376,856" fill="none" stroke="#474747" stroke-width="3.6" stroke-linecap="round" stroke-linejoin="round"/>
<polyline points="1440.5,855.5 1447,859 1504,859 1506,856 1567,856" fill="none" stroke="#474747" stroke-width="3.6" stroke-linecap="round" stroke-linejoin="round"/>
<polyline points="437,778.5 439,779 459,779.5 461,780.5 474.5,781" fill="none" stroke="#474747" stroke-width="3.6" stroke-linecap="round" stroke-linejoin="round"/>
<polyline points="522.5,468.5 525,471.5 537.5,471.5" fill="none" stroke="#474747" stroke-width="3.6" stroke-linecap="round" stroke-linejoin="round"/>
<polyline points="542,716.3 545,718.5 556.5,718.5" fill="none" stroke="#474747" stroke-width="3.6" stroke-linecap="round" stroke-linejoin="round"/>
<polyline points="1312,780 1364.5,780" fill="none" stroke="#474747" stroke-width="3.6" stroke-linecap="round" stroke-linejoin="round"/>
<polyline points="1376.3,614.5 1379,617 1440,617" fill="none" stroke="#474747" stroke-width="3.6" stroke-linecap="round" stroke-linejoin="round"/>
<circle cx="422.7" cy="845" r="2.1" fill="#00ffff"/>
<circle cx="423.8" cy="819" r="2.1" fill="#00ffff"/>
<circle cx="425.2" cy="806" r="2.1" fill="#00ffff"/>
<circle cx="426.7" cy="798" r="2.1" fill="#00ffff"/>
<polyline points="427,797 428.5,794 430,792.5 431.5,793 433,795.5" fill="none" stroke="#00ffff" stroke-width="3.4" stroke-linecap="round" stroke-linejoin="round"/>
<polyline points="1186.5,855.1 1187.8,855.4 1189.1,855.1 1190.4,855.4 1191.7,855.4 1193.0,854.7 1194.3,854.6 1195.6,855.5 1196.9,854.8 1198.2,854.7 1199.5,855.6 1200.8,854.9 1202.1,855.3 1203.4,854.9 1204.7,855.0 1206.0,854.4 1207.3,854.9 1208.6,855.2 1209.9,854.7 1211.2,855.0 1212.5,854.8 1213.8,854.1 1215.1,854.9 1216.4,854.6 1217.7,854.2 1219.0,853.9 1220.3,854.8 1221.6,854.4 1222.9,854.7 1224.2,855.0 1225.5,854.8 1226.8,855.1 1228.1,854.5 1229.4,855.0 1230.7,854.6 1232.0,855.2 1233.3,855.2 1234.6,854.3 1235.9,854.4 1237.2,854.6 1238.5,855.7 1239.8,855.2 1241.1,855.6 1242.4,855.4 1243.7,855.8 1245.0,855.8 1246.3,855.9 1247.6,856.3 1248.9,856.5" fill="none" stroke="#00ffff" stroke-width="3.8" stroke-linecap="round" stroke-linejoin="round"/>
<line x1="423.5" y1="155" x2="423.5" y2="989" stroke="#00ff00" stroke-width="1.3"/>
<line x1="434.5" y1="155" x2="434.5" y2="989" stroke="#ff1010" stroke-width="1.3"/>
<line x1="804.5" y1="155" x2="804.5" y2="989" stroke="#1414ff" stroke-width="1.3"/>
<line x1="1186.5" y1="155" x2="1186.5" y2="989" stroke="#00ff00" stroke-width="1.2" stroke-dasharray="4 2"/>
<line x1="1249.5" y1="155" x2="1249.5" y2="989" stroke="#ff1010" stroke-width="1.2" stroke-dasharray="4 2"/>
</svg>
<div style="left:1610px;top:154px;width:3px;height:877px;background:#f0f0f0"></div>
<div class="t" style="left:1624.00px;top:163.00px;font-size:13.8px;line-height:13.8px;color:#ffc107;font-weight:bold;-webkit-text-stroke:0.25px #ffc107;transform:scaleX(0.9780);transform-origin:0 0;">Display</div>
<div class="t" style="left:1624.00px;top:186.00px;font-size:13.8px;line-height:13.8px;color:#fff;letter-spacing:-0.222px;">Shots Displayed</div>
<div class="t" style="left:1770.80px;top:186.00px;font-size:13.8px;line-height:13.8px;color:#fff;font-weight:bold;-webkit-text-stroke:0.25px #fff;">1</div>
<div class="t" style="left:1624.00px;top:210.00px;font-size:13.8px;line-height:13.8px;color:#ffc107;font-weight:bold;-webkit-text-stroke:0.25px #ffc107;transform:scaleX(1.0471);transform-origin:0 0;">Settings</div>
<div class="t" style="left:1624.00px;top:234.00px;font-size:13.8px;line-height:13.8px;color:#fff;letter-spacing:-0.178px;">Samples per Shot</div>
<div class="t" style="left:1770.40px;top:234.00px;font-size:13.8px;line-height:13.8px;color:#fff;font-weight:bold;-webkit-text-stroke:0.25px #fff;transform:scaleX(1.1506);transform-origin:0 0;">900</div>
<div class="t" style="left:1624.00px;top:260.00px;font-size:13.8px;line-height:13.8px;color:#fff;letter-spacing:-0.292px;">Rest Channel</div>
<div style="left:1767px;top:255px;width:130px;height:21px;background:#212121;box-sizing:border-box;border:1px solid #f2f2f2;box-shadow:inset 1px 1px 0 #050505"></div>
<div class="t" style="left:1770.50px;top:260.00px;font-size:13.8px;line-height:13.8px;color:#fff;">5</div>
<div style="left:1624px;top:282px;width:273px;height:3px;background:#fbfbfb"></div>
<div class="t" style="left:1624.00px;top:296.00px;font-size:13.8px;line-height:13.8px;color:#fff;letter-spacing:-0.318px;">Channel</div>
<div style="left:1767px;top:291px;width:130px;height:21px;background:#212121;box-sizing:border-box;border:1px solid #f2f2f2;box-shadow:inset 1px 1px 0 #050505"></div>
<div style="left:1881px;top:293px;width:14px;height:17px;box-sizing:border-box;border-top:1px solid #f4f4f4;border-left:1px solid #f4f4f4;border-right:2px solid #9a9a9a;border-bottom:2px solid #9a9a9a;box-shadow:inset 1px 1px 0 #050505;background:#212121"></div>
<svg style="left:1881px;top:293px" width="14" height="17"><path d="M3.5 5.5 L10.5 5.5 L7 9.5 Z" fill="#f8f8f8"/></svg>
<div class="t" style="left:1771.00px;top:296.00px;font-size:13.8px;line-height:13.8px;color:#fff;letter-spacing:-0.276px;">Channel 0</div>
<div style="left:1624px;top:318px;width:273px;height:25px;background:#009688"></div>
<div class="t" style="left:1708.50px;top:325.00px;font-size:13.8px;line-height:13.8px;color:#000;font-weight:bold;-webkit-text-stroke:0.25px #000;transform:scaleX(1.0278);transform-origin:0 0;">ADD CHANNEL</div>
<div style="left:1624px;top:349px;width:273px;height:25px;background:#f44336"></div>
<div class="t" style="left:1655.50px;top:356.00px;font-size:13.8px;line-height:13.8px;color:#000;font-weight:bold;-webkit-text-stroke:0.25px #000;transform:scaleX(1.0497);transform-origin:0 0;">REMOVE TRAILING CHANNEL</div>
<div class="t" style="left:1624.00px;top:385.00px;font-size:13.8px;line-height:13.8px;color:#fff;letter-spacing:-0.604px;">Name</div>
<div style="left:1767px;top:380px;width:130px;height:21px;background:#212121;box-sizing:border-box;border:1px solid #f2f2f2;box-shadow:inset 1px 1px 0 #050505"></div>
<div class="t" style="left:1770.50px;top:385.00px;font-size:13.8px;line-height:13.8px;color:#fff;letter-spacing:-0.492px;">signal</div>
<div class="t" style="left:1624.00px;top:412.00px;font-size:13.8px;line-height:13.8px;color:#fff;letter-spacing:-0.341px;">Physical Channel</div>
<div style="left:1767px;top:407px;width:130px;height:21px;background:#212121;box-sizing:border-box;border:1px solid #f2f2f2;box-shadow:inset 1px 1px 0 #050505"></div>
<div class="t" style="left:1770.50px;top:412.00px;font-size:13.8px;line-height:13.8px;color:#fff;">0</div>
<div class="t" style="left:1624.00px;top:439.00px;font-size:13.8px;line-height:13.8px;color:#fff;letter-spacing:-0.041px;">Range +/-V, (uV/level)</div>
<div style="left:1767px;top:434px;width:130px;height:21px;background:#212121;box-sizing:border-box;border:1px solid #f2f2f2;box-shadow:inset 1px 1px 0 #050505"></div>
<div style="left:1881px;top:436px;width:14px;height:17px;box-sizing:border-box;border-top:1px solid #f4f4f4;border-left:1px solid #f4f4f4;border-right:2px solid #9a9a9a;border-bottom:2px solid #9a9a9a;box-shadow:inset 1px 1px 0 #050505;background:#212121"></div>
<svg style="left:1881px;top:436px" width="14" height="17"><path d="M3.5 5.5 L10.5 5.5 L7 9.5 Z" fill="#f8f8f8"/></svg>
<div class="t" style="left:1771.00px;top:439.00px;font-size:13.8px;line-height:13.8px;color:#fff;letter-spacing:0.272px;">10.0 (320.0)</div>
<div class="t" style="left:1624.00px;top:464.00px;font-size:13.8px;line-height:13.8px;color:#fff;letter-spacing:0.497px;">Invert</div>
<div style="left:1767px;top:463px;width:13px;height:13px;box-sizing:border-box;border:1px solid #8f8f8f;background:linear-gradient(135deg,#dcdcdc,#fbfbfb)"></div>
<div class="t" style="left:1624.00px;top:489.00px;font-size:13.8px;line-height:13.8px;color:#fff;letter-spacing:-0.212px;">Signal Start</div>
<div style="left:1767px;top:484px;width:130px;height:21px;background:#212121;box-sizing:border-box;border:1px solid #f2f2f2;box-shadow:inset 1px 1px 0 #050505"></div>
<div class="t" style="left:1770.50px;top:489.00px;font-size:13.8px;line-height:13.8px;color:#fff;">1</div>
<div class="t" style="left:1624.00px;top:516.00px;font-size:13.8px;line-height:13.8px;color:#fff;letter-spacing:-0.358px;">Signal Stop</div>
<div style="left:1767px;top:511px;width:130px;height:21px;background:#212121;box-sizing:border-box;border:1px solid #f2f2f2;box-shadow:inset 1px 1px 0 #050505"></div>
<div class="t" style="left:1770.50px;top:516.00px;font-size:13.8px;line-height:13.8px;color:#fff;">10</div>
<div class="t" style="left:1624.00px;top:543.00px;font-size:13.8px;line-height:13.8px;color:#fff;letter-spacing:-0.476px;">Signal Presample</div>
<div style="left:1767px;top:538px;width:130px;height:21px;background:#212121;box-sizing:border-box;border:1px solid #f2f2f2;box-shadow:inset 1px 1px 0 #050505"></div>
<div class="t" style="left:1770.50px;top:543.00px;font-size:13.8px;line-height:13.8px;color:#fff;">0</div>
<div class="t" style="left:1624.00px;top:570.00px;font-size:13.8px;line-height:13.8px;color:#fff;letter-spacing:-0.318px;">Signal Method</div>
<div style="left:1767px;top:565px;width:130px;height:21px;background:#212121;box-sizing:border-box;border:1px solid #f2f2f2;box-shadow:inset 1px 1px 0 #050505"></div>
<div style="left:1881px;top:567px;width:14px;height:17px;box-sizing:border-box;border-top:1px solid #f4f4f4;border-left:1px solid #f4f4f4;border-right:2px solid #9a9a9a;border-bottom:2px solid #9a9a9a;box-shadow:inset 1px 1px 0 #050505;background:#212121"></div>
<svg style="left:1881px;top:567px" width="14" height="17"><path d="M3.5 5.5 L10.5 5.5 L7 9.5 Z" fill="#f8f8f8"/></svg>
<div class="t" style="left:1771.00px;top:570.00px;font-size:13.8px;line-height:13.8px;color:#fff;letter-spacing:-0.123px;">Average</div>
<div class="t" style="left:1624.00px;top:595.00px;font-size:13.8px;line-height:13.8px;color:#fff;letter-spacing:-0.754px;">Use Baseline</div>
<div style="left:1767px;top:594px;width:13px;height:13px;box-sizing:border-box;border:1px solid #8f8f8f;background:linear-gradient(135deg,#dcdcdc,#fbfbfb)"></div>
<svg style="left:1767px;top:594px" width="13" height="13"><path d="M3.4 7.6 L5.7 10.6 L9.9 3.6" stroke="#3b559c" stroke-width="1.9" fill="none" stroke-linejoin="round"/></svg>
<div class="t" style="left:1624.00px;top:620.00px;font-size:13.8px;line-height:13.8px;color:#fff;letter-spacing:-0.347px;">Baseline Start</div>
<div style="left:1767px;top:615px;width:130px;height:21px;background:#212121;box-sizing:border-box;border:1px solid #f2f2f2;box-shadow:inset 1px 1px 0 #050505"></div>
<div class="t" style="left:1770.50px;top:620.00px;font-size:13.8px;line-height:13.8px;color:#fff;">600</div>
<div class="t" style="left:1624.00px;top:647.00px;font-size:13.8px;line-height:13.8px;color:#fff;letter-spacing:-0.512px;">Baseline Stop</div>
<div style="left:1767px;top:642px;width:130px;height:21px;background:#212121;box-sizing:border-box;border:1px solid #f2f2f2;box-shadow:inset 1px 1px 0 #050505"></div>
<div class="t" style="left:1770.50px;top:647.00px;font-size:13.8px;line-height:13.8px;color:#fff;">650</div>
<div class="t" style="left:1624.00px;top:674.00px;font-size:13.8px;line-height:13.8px;color:#fff;letter-spacing:-0.583px;">Baseline Presample</div>
<div style="left:1767px;top:669px;width:130px;height:21px;background:#212121;box-sizing:border-box;border:1px solid #f2f2f2;box-shadow:inset 1px 1px 0 #050505"></div>
<div class="t" style="left:1770.50px;top:674.00px;font-size:13.8px;line-height:13.8px;color:#fff;">0</div>
<div class="t" style="left:1624.00px;top:701.00px;font-size:13.8px;line-height:13.8px;color:#fff;letter-spacing:-0.442px;">Baseline Method</div>
<div style="left:1767px;top:696px;width:130px;height:21px;background:#212121;box-sizing:border-box;border:1px solid #f2f2f2;box-shadow:inset 1px 1px 0 #050505"></div>
<div style="left:1881px;top:698px;width:14px;height:17px;box-sizing:border-box;border-top:1px solid #f4f4f4;border-left:1px solid #f4f4f4;border-right:2px solid #9a9a9a;border-bottom:2px solid #9a9a9a;box-shadow:inset 1px 1px 0 #050505;background:#212121"></div>
<svg style="left:1881px;top:698px" width="14" height="17"><path d="M3.5 5.5 L10.5 5.5 L7 9.5 Z" fill="#f8f8f8"/></svg>
<div class="t" style="left:1771.00px;top:701.00px;font-size:13.8px;line-height:13.8px;color:#fff;letter-spacing:-0.123px;">Average</div>
<div style="left:1624px;top:723px;width:273px;height:25px;background:#009688"></div>
<div class="t" style="left:1701.20px;top:730.00px;font-size:13.8px;line-height:13.8px;color:#000;font-weight:bold;-webkit-text-stroke:0.25px #000;transform:scaleX(1.0110);transform-origin:0 0;">APPLY CHANGES</div>
<div style="left:1624px;top:754px;width:273px;height:25px;background:#f44336"></div>
<div class="t" style="left:1695.15px;top:761.00px;font-size:13.8px;line-height:13.8px;color:#000;font-weight:bold;-webkit-text-stroke:0.25px #000;transform:scaleX(1.0148);transform-origin:0 0;">REVERT CHANGES</div>
<div style="left:1624px;top:785px;width:273px;height:3px;background:#fbfbfb"></div>
<div class="t" style="left:1624.00px;top:799.00px;font-size:13.8px;line-height:13.8px;color:#fff;">Chopper</div>
<div style="left:1767px;top:794px;width:130px;height:21px;background:#212121;box-sizing:border-box;border:1px solid #f2f2f2;box-shadow:inset 1px 1px 0 #050505"></div>
<div style="left:1881px;top:796px;width:14px;height:17px;box-sizing:border-box;border-top:1px solid #f4f4f4;border-left:1px solid #f4f4f4;border-right:2px solid #9a9a9a;border-bottom:2px solid #9a9a9a;box-shadow:inset 1px 1px 0 #050505;background:#212121"></div>
<svg style="left:1881px;top:796px" width="14" height="17"><path d="M3.5 5.5 L10.5 5.5 L7 9.5 Z" fill="#f8f8f8"/></svg>
<div class="t" style="left:1771.00px;top:799.00px;font-size:13.8px;line-height:13.8px;color:#fff;letter-spacing:0.045px;">Chopper 0</div>
<div style="left:1624px;top:821px;width:273px;height:25px;background:#009688"></div>
<div class="t" style="left:1709.15px;top:828.00px;font-size:13.8px;line-height:13.8px;color:#000;font-weight:bold;-webkit-text-stroke:0.25px #000;transform:scaleX(1.0072);transform-origin:0 0;">ADD CHOPPER</div>
<div style="left:1624px;top:852px;width:273px;height:25px;background:#f44336"></div>
<div class="t" style="left:1656.00px;top:859.00px;font-size:13.8px;line-height:13.8px;color:#000;font-weight:bold;-webkit-text-stroke:0.25px #000;transform:scaleX(1.0406);transform-origin:0 0;">REMOVE TRAILING CHOPPER</div>
<div class="t" style="left:1624.00px;top:888.00px;font-size:13.8px;line-height:13.8px;color:#fff;letter-spacing:-0.604px;">Name</div>
<div style="left:1767px;top:883px;width:130px;height:21px;background:#212121;box-sizing:border-box;border:1px solid #f2f2f2;box-shadow:inset 1px 1px 0 #050505"></div>
<div class="t" style="left:1770.50px;top:888.00px;font-size:13.8px;line-height:13.8px;color:#fff;letter-spacing:0.140px;">w1 chopper</div>
<div class="t" style="left:1624.00px;top:915.00px;font-size:13.8px;line-height:13.8px;color:#fff;letter-spacing:-0.341px;">Physical Channel</div>
<div style="left:1767px;top:910px;width:130px;height:21px;background:#212121;box-sizing:border-box;border:1px solid #f2f2f2;box-shadow:inset 1px 1px 0 #050505"></div>
<div class="t" style="left:1770.50px;top:915.00px;font-size:13.8px;line-height:13.8px;color:#fff;">6</div>
<div class="t" style="left:1624.00px;top:940.00px;font-size:13.8px;line-height:13.8px;color:#fff;letter-spacing:0.497px;">Invert</div>
<div style="left:1767px;top:939px;width:13px;height:13px;box-sizing:border-box;border:1px solid #8f8f8f;background:linear-gradient(135deg,#dcdcdc,#fbfbfb)"></div>
<div class="t" style="left:1624.00px;top:965.00px;font-size:13.8px;line-height:13.8px;color:#fff;letter-spacing:0.059px;">Index</div>
<div style="left:1767px;top:960px;width:130px;height:21px;background:#212121;box-sizing:border-box;border:1px solid #f2f2f2;box-shadow:inset 1px 1px 0 #050505"></div>
<div class="t" style="left:1770.50px;top:965.00px;font-size:13.8px;line-height:13.8px;color:#fff;">300</div>
<div style="left:1624px;top:987px;width:273px;height:25px;background:#009688"></div>
<div class="t" style="left:1701.20px;top:994.00px;font-size:13.8px;line-height:13.8px;color:#000;font-weight:bold;-webkit-text-stroke:0.25px #000;transform:scaleX(1.0110);transform-origin:0 0;">APPLY CHANGES</div>
<div style="left:1624px;top:1018px;width:273px;height:13px;overflow:hidden">
<div style="left:0;top:0;width:273px;height:25px;background:#f44336"></div>
<div class="t" style="left:71.15px;top:6.00px;font-size:13.8px;line-height:13.8px;color:#000;font-weight:bold;-webkit-text-stroke:0.25px #000;transform:scaleX(1.0148);transform-origin:0 0;">REVERT CHANGES</div>
</div>
<div style="left:1902px;top:154px;width:17px;height:877px;background:repeating-conic-gradient(#e9e9e9 0 25%,#ffffff 0 50%) 0 0/2px 2px"></div>
<div style="left:1902px;top:154px;width:17px;height:17px;box-sizing:border-box;background:#ececec;border-right:1px solid #6e6e6e;border-bottom:1px solid #6e6e6e;border-top:2px solid #fff;border-left:2px solid #fff;box-shadow:inset -1px -1px 0 #ababab"></div>
<div style="left:1902px;top:171px;width:17px;height:825px;box-sizing:border-box;background:#ececec;border-right:1px solid #6e6e6e;border-bottom:1px solid #6e6e6e;border-top:2px solid #fff;border-left:2px solid #fff;box-shadow:inset -1px -1px 0 #ababab"></div>
<div style="left:1902px;top:1015px;width:17px;height:16px;box-sizing:border-box;background:#ececec;border-right:1px solid #6e6e6e;border-bottom:1px solid #6e6e6e;border-top:2px solid #fff;border-left:2px solid #fff;box-shadow:inset -1px -1px 0 #ababab"></div>
<svg style="left:1902px;top:154px" width="17" height="16"><path d="M4 10 L11 10 L7.5 6 Z" fill="#000"/></svg>
<svg style="left:1902px;top:1015px" width="17" height="16"><path d="M4 5.5 L11 5.5 L7.5 9.5 Z" fill="#000"/></svg>
<div style="left:8px;top:1040px;width:1920px;height:1px;background:#171717"></div>
<div style="left:8px;top:1041px;width:1920px;height:7px;background:linear-gradient(#aebfd6,#8fa4c0)"></div>
<div style="left:8px;top:1041px;width:60px;height:7px;background:#7d93b3"></div>
<svg style="left:20px;top:1041px" width="36" height="7"><ellipse cx="15" cy="14" rx="13" ry="13" fill="#d8e4f2" stroke="#3f6fa8" stroke-width="1"/></svg>
<div style="left:68px;top:1042px;width:58px;height:6px;box-sizing:border-box;border:1px solid #6d7f98;border-bottom:none;border-radius:2px 2px 0 0;background:linear-gradient(#eef3fa,#c2d2e6)"></div>
<div style="left:130px;top:1042px;width:58px;height:6px;box-sizing:border-box;border:1px solid #6d7f98;border-bottom:none;border-radius:2px 2px 0 0;background:linear-gradient(#eef3fa,#c2d2e6)"></div>
<div style="left:189px;top:1042px;width:64px;height:6px;box-sizing:border-box;border:1px solid #6d7f98;border-bottom:none;border-radius:2px 2px 0 0;background:linear-gradient(#eef3fa,#c2d2e6)"></div>
<div style="left:254px;top:1042px;width:58px;height:6px;box-sizing:border-box;border:1px solid #6d7f98;border-bottom:none;border-radius:2px 2px 0 0;background:linear-gradient(#eef3fa,#c2d2e6)"></div>
<div style="left:316px;top:1042px;width:58px;height:6px;box-sizing:border-box;border:1px solid #6d7f98;border-bottom:none;border-radius:2px 2px 0 0;background:linear-gradient(#eef3fa,#c2d2e6)"></div>
<div style="left:378px;top:1042px;width:58px;height:6px;box-sizing:border-box;border:1px solid #6d7f98;border-bottom:none;border-radius:2px 2px 0 0;background:linear-gradient(#eef3fa,#c2d2e6)"></div>
<div style="left:440px;top:1042px;width:58px;height:6px;box-sizing:border-box;border:1px solid #6d7f98;border-bottom:none;border-radius:2px 2px 0 0;background:linear-gradient(#eef3fa,#c2d2e6)"></div>
<div style="left:502px;top:1042px;width:58px;height:6px;box-sizing:border-box;border:1px solid #6d7f98;border-bottom:none;border-radius:2px 2px 0 0;background:linear-gradient(#eef3fa,#c2d2e6)"></div>
<div style="left:564px;top:1042px;width:50px;height:6px;box-sizing:border-box;border:1px solid #6d7f98;border-bottom:none;border-radius:2px 2px 0 0;background:linear-gradient(#eef3fa,#c2d2e6)"></div>
<svg style="left:68px;top:1042px" width="560" height="6"><rect x="14" y="4" width="12" height="2" fill="#d9a43a"/><ellipse cx="91" cy="6" rx="7" ry="5" fill="#e0402c"/><path d="M148 6 L170 1 L170 6 Z" fill="#8a3b9a"/><rect x="360" y="3" width="22" height="3" fill="none" stroke="#3a7bd5"/><rect x="420" y="3" width="6" height="3" fill="#3a7bd5"/><rect x="440" y="3" width="6" height="3" fill="#3a7bd5"/></svg>
<div style="left:616px;top:1041px;width:2px;height:7px;background:#5a6e8a"></div>
<div style="left:1700px;top:1041px;width:228px;height:7px;background:linear-gradient(90deg,#aac0dc 0px,#8799b2 60px,#8496ae 213px)"></div>
<div style="left:1913px;top:1041px;width:15px;height:7px;box-sizing:border-box;border:1px solid #c8d4e4;border-bottom:none;background:linear-gradient(#9aa8bb,#7d8ca2)"></div>
</body></html>
